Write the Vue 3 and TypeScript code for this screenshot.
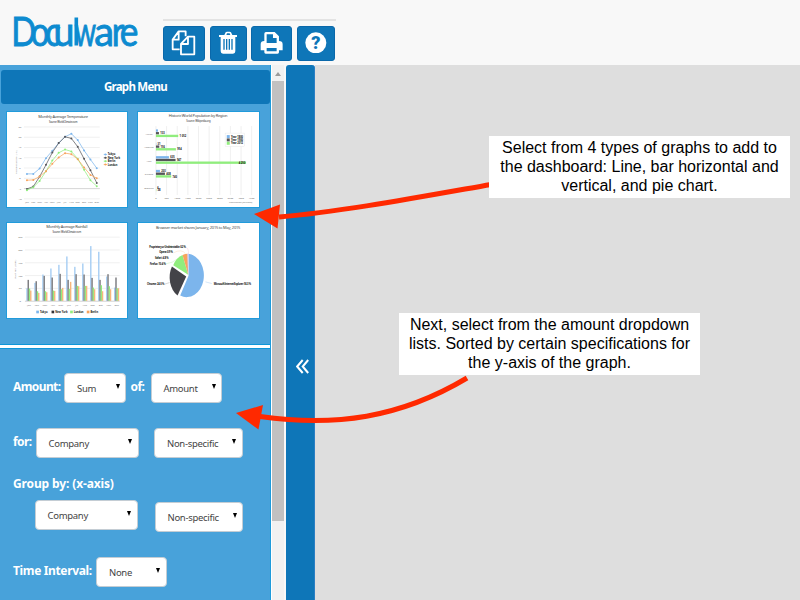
<script setup lang="ts">
interface Field { value: string; cls: string }
interface Row { label: string; cls: string; fields: Field[]; mid?: string }

const rows: Row[] = [
  { label: 'Amount:', cls: 'r-amount', mid: 'of:', fields: [{ value: 'Sum', cls: 'w-sum' }, { value: 'Amount', cls: 'w-amount' }] },
  { label: 'for:', cls: 'r-for', fields: [{ value: 'Company', cls: 'w-company' }, { value: 'Non-specific', cls: 'w-spec' }] },
]
// Condensed wordmark: each letter has its own start and advance
const logo: [string, number, number][] = [
  ['D', -1.7, 25], ['o', 17.7, 18.6], ['c', 32.3, 15.5], ['u', 40.5, 20.9],
  ['w', 61.5, 21.5], ['a', 81.2, 19.8], ['r', 98.7, 12.5], ['e', 106.7, 18.6],
]
const months = ['Jan', 'Feb', 'Mar', 'Apr', 'May', 'Jun', 'Jul', 'Aug', 'Sep', 'Oct', 'Nov', 'Dec']

const lines = [
  { name: 'Tokyo', color: '#7cb5ec', ys: [205, 205, 189, 158, 136, 113, 94, 85, 104, 135, 162, 188] },
  { name: 'New York', color: '#555559', ys: [250, 243, 213, 178, 141, 113, 94, 99, 124, 160, 194, 232] },
  { name: 'Berlin', color: '#90ed7d', ys: [254, 245, 226, 197, 165, 142, 132, 138, 160, 193, 224, 242] },
  { name: 'London', color: '#f7a35c', ys: [224, 223, 213, 197, 175, 156, 143, 146, 161, 186, 208, 218] },
]
const lx = (i: number) => 81 + i * 19.1
const pts = (ys: number[]) => ys.map((y, i) => `${lx(i)},${y}`).join(' ')

const rain = [
  { name: 'Tokyo', color: '#a5cdf3', legend: '#7cb5ec', tops: [215, 199, 174, 156, 145, 120, 151, 141, 89, 106, 180, 213] },
  { name: 'New York', color: '#77777b', legend: '#333338', tops: [190, 194, 178, 183, 172, 190, 173, 174, 184, 190, 173, 183] },
  { name: 'London', color: '#90ed7d', legend: '#90ed7d', tops: [216, 224, 224, 222, 218, 217, 208, 208, 213, 206, 209, 215] },
  { name: 'Berlin', color: '#f7b57c', legend: '#f7a35c', tops: [222, 229, 227, 223, 214, 196, 209, 208, 218, 224, 218, 215] },
]
const regions = [
  { name: 'Africa', y: 85, bars: [[78, ''], [81, '133'], [139, '1 052']] },
  { name: 'America', y: 125, bars: [[73, '31'], [82, '156'], [132, '954']] },
  { name: 'Asia', y: 165, bars: [[111, '635'], [131, '947'], [343, '4 250']] },
  { name: 'Europe', y: 206, bars: [[84, '203'], [99, '408'], [118, '740']] },
  { name: 'Oceania', y: 247, bars: [[72, ''], [72, '6'], [73, '38']] },
] as { name: string; y: number; bars: [number, string][] }[]
const regionColors = ['#7cb5ec', '#555559', '#90ed7d']
</script>

<template>
  <div class="page">
    <header class="top">
      <svg class="logo" viewBox="0 0 130 44" width="130" height="44" aria-label="Docuware">
        <text v-for="[ch, x, w] in logo" :key="ch" :x="x" y="33.500" :textLength="w" lengthAdjust="spacingAndGlyphs">{{ ch }}</text>
        <rect x="61.500" y="5.500" width="3.600" height="28" />
      </svg>
      <nav class="tools">
        <button class="b1">
          <svg viewBox="64 86 76 82" width="25.300" height="27.300" class="outline">
            <path d="M90 147H69V118L87 93H108V108M87 94V118H69M94 162V131L115 109H134V162ZM115 109V131H94" />
          </svg>
        </button>
        <button class="b2">
          <svg viewBox="205 92 60 70" width="20" height="23.300">
            <path fill-rule="evenodd" d="M208 104H224L228 96Q229 94 232 94H240Q243 94 244 96L248 104H262V110H257V153Q257 160 250 160H220Q213 160 213 153V110H208ZM230 104H242L240 99H232ZM221 116V148H225V116ZM229 116V148H233V116ZM237 116V148H241V116ZM245 116V148H249V116Z" />
          </svg>
        </button>
        <button class="b3">
          <svg viewBox="330 91 70 70" width="23.300" height="23.300">
            <path fill-rule="evenodd" d="M343 121V99Q343 94 348 94H374L387 107V121Q398 121 398 131V149H387V155Q387 159 383 159H347Q343 159 343 155V149H332V131Q332 121 343 121ZM350 101V127H380V112H369V101ZM350 142V152H380V142Z" />
          </svg>
        </button>
        <button class="b4">
          <svg viewBox="466 94 65 65" width="21.700" height="21.700">
            <circle cx="498.500" cy="126.500" r="31.500" />
            <text x="498.500" y="146" class="q">?</text>
          </svg>
        </button>
      </nav>
    </header>

    <main class="body">
      <aside class="side">
        <section class="graphs">
          <h2>Graph Menu</h2>
          <div class="thumbs">
            <svg viewBox="21 20 361 284" preserveAspectRatio="none" class="thumb">
              <text x="190" y="38" class="ttl" textLength="150">Monthly Average Temperature</text>
              <text x="190" y="53" class="sub" textLength="86">Source: WorldClimate.com</text>
              <line v-for="n in 8" :key="n" x1="72" x2="300" :y1="34 + n * 30.700" :y2="34 + n * 30.700" class="grid" />
              <text v-for="n in 8" :key="'t' + n" x="60" :y="37 + n * 30.700" class="tick">{{ 30 - n * 5 }}</text>
              <path d="M72 249H300" class="axis" />
              <text v-for="(m, i) in months" :key="m" :x="lx(i)" y="292" class="tick">{{ m }}</text>
              <text transform="translate(50 170) rotate(-90)" class="tick" textLength="70">Temperature (°C)</text>
              <g v-for="(s, k) in lines" :key="s.name">
                <polyline :points="pts(s.ys)" :stroke="s.color" class="ser" />
                <circle v-for="(y, i) in s.ys" :key="i" :cx="lx(i)" :cy="y" r="3" :fill="s.color" />
                <path :d="`M312 ${147 + k * 10}H322`" :stroke="s.color" class="ser" />
                <circle cx="317" :cy="147 + k * 10" r="3" :fill="s.color" />
                <text x="324" :y="150 + k * 10" class="leg">{{ s.name }}</text>
              </g>
            </svg>

            <svg viewBox="18 20 364 284" preserveAspectRatio="none" class="thumb">
              <text x="199" y="36" class="ttl" textLength="177">Historic World Population by Region</text>
              <text x="200" y="51" class="sub" textLength="73">Source: Wikipedia.org</text>
              <line v-for="n in 10" :key="n" :x1="40 + n * 32" :x2="40 + n * 32" y1="62" y2="268" class="grid" />
              <text v-for="n in 10" :key="'t' + n" :x="40 + n * 32" y="280" class="tick">{{ (n - 1) * 500 }}</text>
              <text x="327" y="292" class="tick" textLength="70">Population (millions)</text>
              <g v-for="r in regions" :key="r.name">
                <text x="51" :y="r.y + 3" class="tick">{{ r.name }}</text>
                <g v-for="(b, i) in r.bars" :key="i">
                  <rect x="72" :y="r.y - 13 + i * 8" :width="b[0] - 72" height="7" :fill="regionColors[i]" />
                  <text :x="b[1] === '4 250' ? 321 : b[0] + 4" :y="r.y - 6 + i * 8" class="leg">{{ b[1] }}</text>
                </g>
              </g>
              <rect x="280" y="83" width="58" height="40" fill="#fff" stroke="#ddd" />
              <g v-for="(yr, i) in ['Year 1800', 'Year 1900', 'Year 2012']" :key="yr">
                <rect x="285" :y="89 + i * 10" width="9" height="9" :fill="regionColors[i]" />
                <text x="298" :y="97 + i * 10" class="leg" textLength="36">{{ yr }}</text>
              </g>
            </svg>

            <svg viewBox="21 20 361 284" preserveAspectRatio="none" class="thumb">
              <text x="201" y="36" class="ttl" textLength="124">Monthly Average Rainfall</text>
              <text x="201" y="51" class="sub" textLength="86">Source: WorldClimate.com</text>
              <line v-for="n in 6" :key="n" x1="75" x2="360" :y1="24 + n * 38.300" :y2="24 + n * 38.300" class="grid" />
              <text v-for="n in 6" :key="'t' + n" x="61" :y="27 + n * 38.300" class="tick">{{ 300 - n * 50 }}</text>
              <text transform="translate(48 158) rotate(-90)" class="tick" textLength="56">Rainfall (mm)</text>
              <g v-for="(s, k) in rain" :key="s.name">
                <rect v-for="(t, i) in s.tops" :key="i" :x="79 + i * 24 + k * 3.800" :y="t" width="4.200" :height="253 - t" :fill="s.color" />
              </g>
              <path d="M75 254H360" class="axis" />
              <text v-for="(m, i) in months" :key="m" :x="87 + i * 24" y="267" class="tick">{{ m }}</text>
              <g v-for="(x, k) in [109, 155, 211, 261]" :key="x">
                <rect :x="x" y="282" width="8" height="8" :fill="rain[k].legend" />
                <text :x="x + 11" y="290" class="leg">{{ rain[k].name }}</text>
              </g>
            </svg>

            <svg viewBox="18 20 364 284" preserveAspectRatio="none" class="thumb">
              <text x="199" y="38" class="ttl" textLength="254">Browser market shares January, 2015 to May, 2015</text>
              <path d="M170 178V112A52 65 0 1 1 145 237Z" fill="#7cb5ec" />
              <path d="M163 180L120 150A52 65 0 0 0 137 237Z" fill="#434348" />
              <path d="M169 175L124 146Q134 123 152 116Z" fill="#90ed7d" />
              <path d="M169 175L152 116Q160 112 167 112Z" fill="#f7a35c" />
              <path d="M168 175L167 112H170Z" fill="#c5b9f4" />
              <path d="M162 93Q170 94 170 112" stroke="#f3b1c8" fill="none" />
              <path d="M125 109Q150 96 161 112" stroke="#f7c99c" fill="none" />
              <path d="M102 142Q122 140 137 127" stroke="#a4eb95" fill="none" />
              <path d="M98 203L113 198" stroke="#888" fill="none" />
              <path d="M240 201L221 196" stroke="#7cb5ec" fill="none" />
              <text x="52" y="96" class="leg" textLength="110">Proprietary or Undetectable: 0.2 %</text>
              <text x="82" y="111" class="leg" textLength="41">Opera: 0.9 %</text>
              <text x="69" y="128" class="leg" textLength="41">Safari: 4.8 %</text>
              <text x="53" y="145" class="leg" textLength="49">Firefox: 10.4 %</text>
              <text x="45" y="206" class="leg" textLength="52">Chrome: 24.0 %</text>
              <text x="246" y="206" class="leg" textLength="112">Microsoft Internet Explorer: 56.3 %</text>
            </svg>
          </div>
        </section>

        <section class="form">
          <div v-for="r in rows" :key="r.label" class="row" :class="r.cls">
            <label>{{ r.label }}</label>
            <template v-for="(f, i) in r.fields" :key="i">
              <label v-if="i === 1 && r.mid" class="mid">{{ r.mid }}</label>
              <div class="select" :class="f.cls"><span>{{ f.value }}</span><i /></div>
            </template>
          </div>
          <label class="group">Group by: (x-axis)</label>
          <div class="row r-group">
            <div class="select w-company"><span>Company</span><i /></div>
            <div class="select w-spec"><span>Non-specific</span><i /></div>
          </div>
          <div class="row r-time">
            <label>Time Interval:</label>
            <div class="select w-none"><span>None</span><i /></div>
          </div>
        </section>
      </aside>

      <div class="scroll"><b class="up" /><div class="handle" /></div>
      <div class="collapse">
        <svg viewBox="0 0 13 15" width="13" height="15"><path d="M6.700 1L1.200 7.500L6.700 14M12.200 1L6.700 7.500L12.200 14" /></svg>
      </div>
      <div class="canvas" />
    </main>

    <svg class="arrows" viewBox="0 0 800 600" width="800" height="600">
      <path d="M491 184.500C420 197 340 212 279 217" />
      <path d="M467 378C400 418 335 427 260 416.500" />
      <polygon points="254,214 280,204.500 277.500,228.500" />
      <polygon points="236,413 263,405 258.500,429.500" />
    </svg>
    <div class="note n1">Select from 4 types of graphs to add to<br>the dashboard: Line, bar horizontal and<br>vertical, and pie chart.</div>
    <div class="note n2">Next, select from the amount dropdown<br>lists. Sorted by certain specifications for<br>the y-axis of the graph.</div>
  </div>
</template>

<style>
body { overflow: hidden; }
</style>

<style scoped>
.page { position: relative; width: 800px; height: 600px; overflow: hidden; background: #f8f8f8; font-family: "Noto Sans", sans-serif; display: flex; flex-direction: column; }
.page *, .page { box-sizing: border-box; }
.top { height: 65px; flex: none; display: flex; padding-left: 13px; }
.logo { margin-top: 11.500px; flex: none; fill: #0d8bd0; overflow: visible; }
.logo text { font: 400 40px Lato, sans-serif; stroke: #0d8bd0; stroke-width: .9px; }
.tools { margin: 19px 0 0 19.500px; width: 173px; border-top: 2px solid #e3e3e3; padding-top: 5px; display: flex; height: 42px; justify-content: space-between; }
button { height: 35px; padding: 0; border: 1px solid #0a68aa; border-radius: 3px; background: #0e76b8; display: flex; align-items: center; justify-content: center; }
button svg { fill: #fff; margin-top: -2px; }
.b1 { width: 42.500px; }
.b2 { width: 37px; }
.b3 { width: 41px; }
.b4 { width: 38.500px; }
.outline path { fill: none; stroke: #fff; stroke-width: 5.500px; stroke-linejoin: round; }
.q { font: 900 54px Roboto, sans-serif; text-anchor: middle; fill: #0e76b8; }

.body { flex: 1; display: flex; min-height: 0; }
.side { width: 271px; border-right: 1px solid #1e9bdb; background: #48a2da; display: flex; flex-direction: column; flex: none; }
.graphs { height: 280px; border-bottom: 1px solid #0e96d8; padding: 5px 0 0 1px; flex: none; }
h2 { margin: 0; height: 34px; background: #0e76b8; border-radius: 3px; color: #fff; font-size: 11.500px; line-height: 34px; text-align: center; letter-spacing: -.75px; }
.thumbs { display: grid; grid-template-columns: 120px 121px; gap: 16px 11px; padding: 8px 0 0 6px; }
.thumb { display: block; width: 100%; height: 95px; background: #fff; box-shadow: 0 0 0 1px #219bdb; }
.thumb text { font-family: "Noto Sans", sans-serif; }
.ttl { font-size: 12px; text-anchor: middle; fill: #444; }
.sub { font-size: 8px; text-anchor: middle; fill: #333; }
.tick { font-size: 7.500px; text-anchor: middle; fill: #777; }
.thumb .leg { font-size: 7.800px; font-weight: 700; fill: #111; }
.grid { stroke: #e9e9e9; stroke-width: 2px; }
.axis { stroke: #ccc; stroke-width: 2px; fill: none; }
.ser { fill: none; stroke-width: 2.200px; }

.form { flex: 1; margin-top: 3px; border-top: 1px solid #0e96d8; box-shadow: 0 -3px #fff; padding: 23.500px 0 0 13px; }
label { color: #fff; font-size: 12px; font-weight: 700; letter-spacing: -.6px; white-space: nowrap; line-height: 16px; }
.row { display: flex; align-items: flex-start; }
.row label { margin-top: 6.500px; }
.r-amount { height: 55px; }
.r-amount label:first-child { width: 51px; }
.r-amount .mid { width: 20px; margin-left: 4.500px; }
.r-for { height: 48px; }
.r-for label { width: 22.500px; }
.r-for .w-spec { margin-left: 15.500px; }
.group { display: block; letter-spacing: -.13px; }
.r-group { padding-left: 21.500px; margin-top: 8px; height: 57px; }
.r-group .w-spec { margin-left: 17px; margin-top: 2px; }
.r-time label { width: 83px; letter-spacing: -.35px; }
.select { height: 30.500px; flex: none; background: #fff; border: 1px solid #c4cdd4; border-radius: 4px; padding: 1px 5.500px 0 12px; display: flex; align-items: center; justify-content: space-between; color: #444; font-size: 9.500px; letter-spacing: -.3px; }
.select i { width: 0; border: 2.500px solid transparent; border-top: 5px solid #000; border-bottom: 0; margin-top: -3px; }
.w-sum { width: 62px; }
.w-amount { width: 71.500px; }
.w-company { width: 103px; }
.w-spec { width: 88.500px; }
.w-none { width: 70.500px; }

.scroll { width: 15px; background: #f1f1f1; border-left: 1px solid #fff; border-right: 2px solid #f8f8f8; display: flex; flex-direction: column; align-items: center; }
.up { border: 3px solid transparent; border-bottom: 4px solid #9b9b9b; border-top: 0; margin-top: 7px; }
.handle { width: 12px; height: 440px; margin-top: 5px; background: #c1c1c1; }
.collapse { width: 29px; background: #0e76b8; border-right: 1px solid #2a7fc4; border-radius: 3px 3px 0 0; display: flex; justify-content: center; padding: 294px 0 0 4px; }
.collapse path { fill: none; stroke: #fff; stroke-width: 2px; }
.canvas { flex: 1; background: #dedede; }

.arrows { position: absolute; left: 0; top: 0; }
.arrows path { fill: none; stroke: #ff2900; stroke-width: 5px; }
.arrows polygon { fill: #ff2900; }
.note { position: absolute; width: 301px; height: 62px; padding-top: 2px; background: #fff; color: #000; font: 16px/19px "Liberation Sans", sans-serif; text-align: center; white-space: nowrap; }
.n1 { left: 489px; top: 136px; }
.n2 { left: 399px; top: 313px; }
</style>
